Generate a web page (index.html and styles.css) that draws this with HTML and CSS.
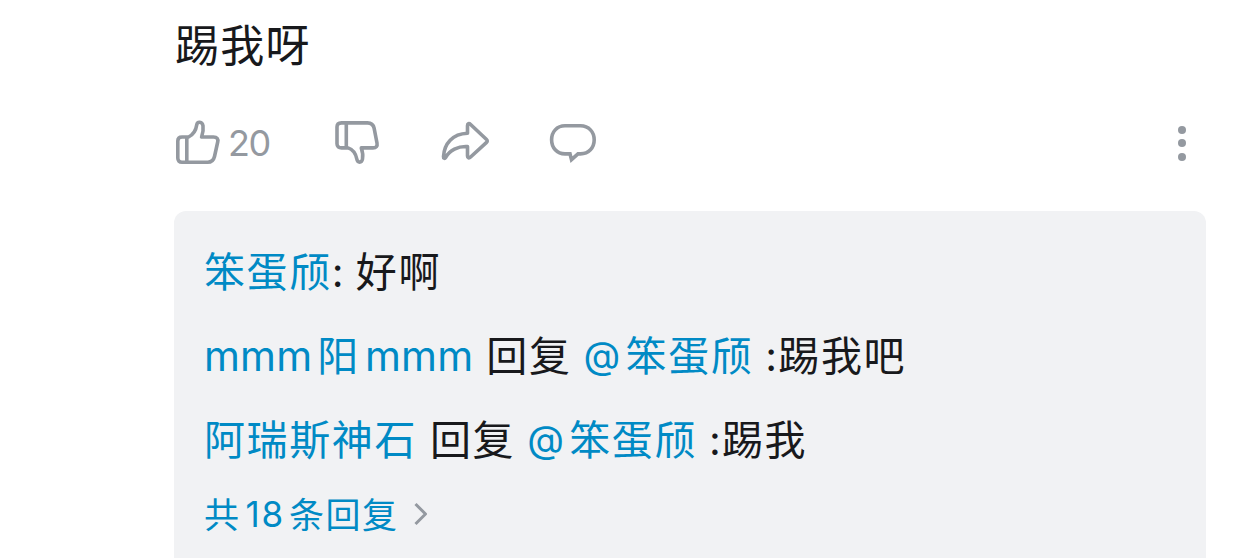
FILE: index.html
```
<!DOCTYPE html>
<html lang="zh-CN">
<head>
  <meta charset="UTF-8">
  <title>评论</title>
  <link rel="stylesheet" href="styles.css">
</head>
<body>
  <div class="comment">
    <p class="content">踢我呀</p>

    <div class="actions">
      <button class="action like" aria-label="点赞">
        <svg width="46" height="48" viewBox="0 0 46 48">
          <path d="M7 18H13.5C18.5 15.5 21 11 21.7 6C22.4 2.2 27.2 2.4 28 6.8C28.6 11 27.8 14.5 26.6 18H38.5C42 18 43.4 20 42.7 23L39.5 37.5C38.6 41.2 36.5 43.2 32.7 43.2H7C4.3 43.2 2.8 41.7 2.8 39V22C2.8 19.3 4.3 18 7 18ZM11.8 18V43.2"/>
        </svg>
        <span class="count">20</span>
      </button>
      <button class="action dislike" aria-label="点踩">
        <svg width="48" height="48" viewBox="0 0 48 48">
          <path d="M7.5 3.9H33.5C37.3 3.9 39.3 5.6 40.1 9.2L43 24C43.6 27 42.2 28.9 39 28.9H27.3C28.5 32.5 29.2 36 28.5 40C27.7 44.2 23.6 44.2 22.8 40C21.8 35 19 30.5 14 28.9H7.5C4.8 28.9 3 27.5 3 24.8V8.1C3 5.4 4.8 3.9 7.5 3.9ZM12.3 3.9V28.9"/>
        </svg>
      </button>
      <button class="action share" aria-label="分享">
        <svg width="52" height="48" viewBox="0 0 52 48">
          <path d="M26.5 14.2V6.7C26.5 4.6 28 4 29.6 5.5L45.3 20.3C46.6 21.5 46.6 22.4 45.3 23.6L29.6 38C28 39.5 26.5 39 26.5 37V27.6C17 27 8.5 31.5 4.7 38.4C3.6 40 2.4 39.3 2.5 37.5C3.3 24.5 11.5 14.8 26.5 14.2Z"/>
        </svg>
      </button>
      <button class="action reply" aria-label="回复">
        <svg width="50" height="48" viewBox="0 0 50 48">
          <path class="sharp" d="M16 6.8H31.5C39.8 6.8 45.2 13 45.2 20.8C45.2 28.7 39.8 34.9 31.5 34.9H29L22.5 40.7L21 34.9H16C7.8 34.9 2.6 28.7 2.6 20.8C2.6 13 7.8 6.8 16 6.8Z"/>
        </svg>
      </button>
      <button class="more" aria-label="更多">
        <i></i><i></i><i></i>
      </button>
    </div>

    <div class="replies">
      <p class="line"><a class="user">笨蛋颀</a><span class="colon">:</span><span class="text">好啊</span></p>
      <p class="line"><a class="user"><span class="en">mmm</span>阳<span class="en after">mmm</span></a><span class="word">回复</span><a class="at">@</a><a class="user">笨蛋颀</a><span class="colon reply-colon">:</span>踢我吧</p>
      <p class="line"><a class="user">阿瑞斯神石</a><span class="word">回复</span><a class="at">@</a><a class="user">笨蛋颀</a><span class="colon reply-colon">:</span>踢我</p>
      <a class="all">共<span class="num">18</span>条回复
        <svg width="16" height="26" viewBox="0 0 16 26"><path d="M2.5 3L12.5 13L2.5 23"/></svg>
      </a>
    </div>
  </div>
</body>
</html>
```
FILE: styles.css
```
* { box-sizing: border-box; }
body {
  margin: 0;
  height: 558px;
  overflow: hidden;
  background: #fff;
  color: #18191c;
  font-family: Inter, "Noto Sans CJK SC", sans-serif;
}
p { margin: 0; }
.comment {
  display: flex;
  flex-direction: column;
  height: 558px;
  padding: 16px 36px 0 174px;
}
.content {
  height: 60px;
  padding-left: 1px;
  line-height: 60px;
  font-size: 44px;
  letter-spacing: 1.2px;
}
.actions {
  display: flex;
  align-items: center;
  height: 48px;
  margin-top: 43px;
  margin-bottom: 44px;
  padding-left: 1px;
}
button {
  display: flex;
  align-items: center;
  padding: 0;
  border: none;
  background: none;
  color: #9499a0;
  font-family: inherit;
}
svg {
  display: block;
  flex: none;
  fill: none;
  stroke: #9499a0;
  stroke-width: 3.6;
  stroke-linejoin: round;
}
.sharp { stroke-linejoin: miter; }
.count {
  margin-left: 7px;
  font-size: 36px;
  line-height: 48px;
  letter-spacing: -1.5px;
}
.like { width: 159px; }
.dislike { width: 107px; }
.share { width: 108px; }
.more {
  flex-direction: column;
  gap: 5.5px;
  margin-left: auto;
  margin-right: 20px;
}
.more i {
  width: 8px;
  height: 8px;
  border-radius: 50%;
  background: #9499a0;
}
.replies {
  flex: 1;
  padding: 19px 30px 0;
  border-radius: 12px 12px 0 0;
  background: #f1f2f4;
}
.line {
  display: flex;
  align-items: baseline;
  height: 84px;
  line-height: 84px;
  font-size: 41px;
  letter-spacing: 1.6px;
  white-space: nowrap;
}
.user, .at, .all { color: #008ac5; }
.en { margin-right: 5px; letter-spacing: 0.2px; }
.en.after { margin: 0 0 0 5px; }
.colon { width: 24px; }
.word { margin: 0 12px 0 13px; }
.at {
  position: relative;
  top: -2px;
  width: 42px;
  font-size: 38px;
}
.reply-colon { width: 13px; margin-left: 12px; }
.all {
  display: flex;
  align-items: center;
  height: 60px;
  font-size: 35px;
  letter-spacing: 1.5px;
}
.num { margin: 3px 4px 0 5px; letter-spacing: 1.8px; }
.all svg { margin: 4px 0 0 14px; stroke-width: 3; }
```
